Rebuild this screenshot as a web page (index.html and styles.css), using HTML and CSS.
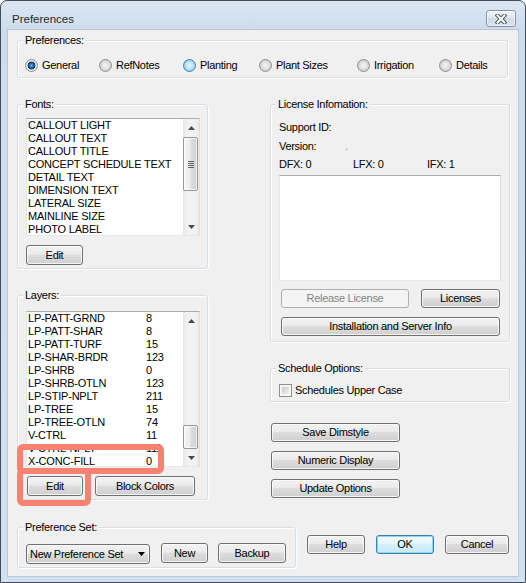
FILE: index.html
```html
<!DOCTYPE html>
<html>
<head>
<meta charset="utf-8">
<title>Preferences</title>
<link rel="stylesheet" href="styles.css">
</head>
<body>
<div class="window">
  <div class="titlebar">
    <span class="title">Preferences</span>
    <button class="close" aria-label="Close">
      <svg width="12" height="10" viewBox="0 0 12 10">
        <path d="M2.5 1.5 L9.5 8.5 M9.5 1.5 L2.5 8.5" stroke="#4b5563" stroke-width="4" stroke-linecap="square" fill="none"/>
        <path d="M2.5 1.5 L9.5 8.5 M9.5 1.5 L2.5 8.5" stroke="#ffffff" stroke-width="2" stroke-linecap="square" fill="none"/>
      </svg>
    </button>
  </div>
  <div class="client">
    <div class="group pref-group">
      <div class="group-title">Preferences:</div>
      <div class="radio-row">
        <label class="opt"><span class="radio checked"></span>General</label>
        <label class="opt"><span class="radio"></span>RefNotes</label>
        <label class="opt"><span class="radio hover"></span>Planting</label>
        <label class="opt"><span class="radio"></span>Plant Sizes</label>
        <label class="opt"><span class="radio"></span>Irrigation</label>
        <label class="opt"><span class="radio"></span>Details</label>
      </div>
    </div>

    <div class="main">
      <div class="col-left">
        <div class="group fonts-group">
          <div class="group-title">Fonts:</div>
          <div class="listbox fonts-list">
            <div class="items">
              <div class="item">CALLOUT LIGHT</div>
              <div class="item">CALLOUT TEXT</div>
              <div class="item">CALLOUT TITLE</div>
              <div class="item">CONCEPT SCHEDULE TEXT</div>
              <div class="item">DETAIL TEXT</div>
              <div class="item">DIMENSION TEXT</div>
              <div class="item">LATERAL SIZE</div>
              <div class="item">MAINLINE SIZE</div>
              <div class="item">PHOTO LABEL</div>
            </div>
            <div class="vscroll">
              <div class="sb-btn"><svg width="7" height="4" viewBox="0 0 7 4"><path d="M0 4 L3.5 0 L7 4 Z" fill="#4a4a4a"/></svg></div>
              <div class="sb-track"><div class="thumb fonts-thumb"><span class="grip"></span></div></div>
              <div class="sb-btn"><svg width="7" height="4" viewBox="0 0 7 4"><path d="M0 0 L3.5 4 L7 0 Z" fill="#4a4a4a"/></svg></div>
            </div>
          </div>
          <button class="btn edit-btn">Edit</button>
        </div>

        <div class="group layers-group">
          <div class="group-title">Layers:</div>
          <div class="listbox layers-list">
            <div class="items">
              <div class="item row"><span>LP-PATT-GRND</span><span>8</span></div>
              <div class="item row"><span>LP-PATT-SHAR</span><span>8</span></div>
              <div class="item row"><span>LP-PATT-TURF</span><span>15</span></div>
              <div class="item row"><span>LP-SHAR-BRDR</span><span>123</span></div>
              <div class="item row"><span>LP-SHRB</span><span>0</span></div>
              <div class="item row"><span>LP-SHRB-OTLN</span><span>123</span></div>
              <div class="item row"><span>LP-STIP-NPLT</span><span>211</span></div>
              <div class="item row"><span>LP-TREE</span><span>15</span></div>
              <div class="item row"><span>LP-TREE-OTLN</span><span>74</span></div>
              <div class="item row"><span>V-CTRL</span><span>11</span></div>
              <div class="item row"><span>V-CTRL-NPLT</span><span>111</span></div>
              <div class="item row"><span>X-CONC-FILL</span><span>0</span></div>
            </div>
            <div class="vscroll">
              <div class="sb-btn"><svg width="7" height="4" viewBox="0 0 7 4"><path d="M0 4 L3.5 0 L7 4 Z" fill="#4a4a4a"/></svg></div>
              <div class="sb-track"><div class="thumb layers-thumb"></div></div>
              <div class="sb-btn"><svg width="7" height="4" viewBox="0 0 7 4"><path d="M0 0 L3.5 4 L7 0 Z" fill="#4a4a4a"/></svg></div>
            </div>
          </div>
          <div class="btn-row">
            <button class="btn layer-edit">Edit</button>
            <button class="btn block-colors">Block Colors</button>
          </div>
        </div>
      </div>

      <div class="col-right">
        <div class="group license-group">
          <div class="group-title">License Infomation:</div>
          <div class="info-row first">Support ID:</div>
          <div class="info-row version"><span>Version:</span><span class="ver-val">.</span></div>
          <div class="info-row fx"><span>DFX: 0</span><span>LFX: 0</span><span>IFX: 1</span></div>
          <div class="listbox license-list"></div>
          <div class="lic-row">
            <button class="btn disabled release">Release License</button>
            <button class="btn licenses">Licenses</button>
          </div>
          <button class="btn install">Installation and Server Info</button>
        </div>

        <div class="group schedule-group">
          <div class="group-title">Schedule Options:</div>
          <label class="check-row"><span class="checkbox"></span>Schedules Upper Case</label>
        </div>

        <button class="btn side-btn first-side">Save Dimstyle</button>
        <button class="btn side-btn">Numeric Display</button>
        <button class="btn side-btn">Update Options</button>
      </div>
    </div>

    <div class="bottom">
      <div class="group set-group">
        <div class="group-title">Preference Set:</div>
        <div class="set-row">
          <button class="btn combo"><span>New Preference Set</span><svg width="7" height="4" viewBox="0 0 7 4"><path d="M0 0 L3.5 4 L7 0 Z" fill="#000"/></svg></button>
          <button class="btn new-btn">New</button>
          <button class="btn backup-btn">Backup</button>
        </div>
      </div>
      <div class="dlg-btns">
        <button class="btn help-btn">Help</button>
        <button class="btn default ok-btn">OK</button>
        <button class="btn cancel-btn">Cancel</button>
      </div>
    </div>
  </div>

  <svg class="annot" width="148" height="62" viewBox="0 0 148 62">
    <rect x="3" y="3" width="141" height="24" rx="3" fill="none" stroke="#f6826f" stroke-width="6"/>
    <rect x="3" y="27" width="68" height="32" rx="3" fill="none" stroke="#f6826f" stroke-width="6"/>
  </svg>
</div>
</body>
</html>
```

FILE: styles.css
```css
* { box-sizing: border-box; }
html, body { margin: 0; padding: 0; }
body {
  width: 526px;
  height: 583px;
  overflow: hidden;
  background: #ffffff;
  font-family: "Liberation Sans", Arial, sans-serif;
  font-size: 11px;
  color: #000;
}
.window {
  position: relative;
  width: 526px;
  height: 583px;
  border: 1px solid #444d5b;
  border-radius: 7px 7px 0 0;
  background: linear-gradient(#dbe6f3, #cddded 30px, #d2e1f1);
  display: flex;
  flex-direction: column;
}
.titlebar {
  flex: none;
  height: 29px;
  display: flex;
  justify-content: space-between;
  align-items: flex-start;
  padding: 0 9px 0 11px;
}
.title {
  margin-top: 11px;
  font-size: 11.5px;
  line-height: 14px;
  color: #2b2b2b;
}
.close {
  margin-top: 9px;
  width: 30px;
  height: 17px;
  padding: 0;
  border: 1px solid #8592a4;
  border-radius: 3px;
  background: linear-gradient(#eef3f9, #dde6f0 50%, #d0dbe8 50%, #dae3ee);
  box-shadow: inset 0 0 0 1px rgba(255,255,255,0.6);
  display: flex;
  align-items: center;
  justify-content: center;
}
.client {
  flex: none;
  margin: 0 7px;
  width: 510px;
  height: 546px;
  background: #f0f0f0;
  box-shadow: 0 0 0 1px #b7c8db;
  padding: 10px 0 0 9px;
  letter-spacing: -0.3px;
}
.group {
  border: 1px solid #d5dfe5;
  border-radius: 3px;
  box-shadow: inset 1px 1px 0 #ffffff, 1px 1px 0 #ffffff;
  padding-left: 8px;
}
.group-title {
  width: max-content;
  margin: -7px 0 0 -3px;
  padding: 0 2px;
  background: #f0f0f0;
  line-height: 13px;
}
.pref-group { width: 491px; padding-bottom: 5px; }
.radio-row {
  margin: 12px 0 0 -1px;
  display: grid;
  grid-template-columns: 74px 84px 76px 98px 82px auto;
  line-height: 13px;
}
.opt { display: flex; align-items: center; gap: 4px; white-space: nowrap; }
.radio {
  flex: none;
  width: 13px;
  height: 13px;
  border-radius: 50%;
  border: 1px solid #8e8f8f;
  background: radial-gradient(circle, #f4f4f4 0, #e4e4e4 3px, #cbcbcb 6px);
}
.radio.checked {
  background: radial-gradient(circle, #8fcaf3 0, #2e7fc4 1.4px, #164f8c 2.8px, #0d345f 3.6px, #dcdcdc 4.2px, #eeeeee 4.8px, #cccccc 6px);
}
.radio.hover {
  border-color: #3c7fb1;
  background: radial-gradient(circle, #eaf7fe 0, #c3e7fa 3px, #8fcdf1 6px);
}

.main { display: flex; align-items: flex-start; margin-top: 26px; }
.col-left { width: 191px; flex: none; }
.col-right { width: 240px; flex: none; margin-left: 62px; }

.listbox {
  display: flex;
  background: #ffffff;
  border: 1px solid;
  border-color: #abadb3 #dbdfe6 #e3e9ef #e2e3ea;
}
.items {
  flex: 1;
  overflow: hidden;
  padding-left: 1px;
  line-height: 13px;
  letter-spacing: -0.2px;
  white-space: nowrap;
}
.item.row { display: grid; grid-template-columns: 118px auto; }
.vscroll {
  flex: none;
  width: 16px;
  display: flex;
  flex-direction: column;
  background: linear-gradient(90deg, #e6e6e6, #f2f2f2 25%, #f2f2f2 75%, #e9e9e9);
}
.sb-btn {
  flex: none;
  height: 17px;
  display: flex;
  align-items: center;
  justify-content: center;
}
.sb-track { flex: 1; display: flex; flex-direction: column; }
.thumb {
  width: 15px;
  border: 1px solid #979797;
  border-radius: 2px;
  background: linear-gradient(90deg, #f5f5f5, #ececec 45%, #dcdcdc 55%, #d0d0d0);
  box-shadow: inset 0 0 0 1px rgba(255,255,255,0.7);
  display: flex;
  align-items: center;
  justify-content: center;
}
.fonts-thumb { margin-top: 1px; height: 54px; }
.layers-thumb { margin-top: auto; height: 24px; }
.grip {
  width: 6px;
  height: 7px;
  background: repeating-linear-gradient(#5e5e5e 0 1px, transparent 1px 2px);
}

.btn {
  display: block;
  height: 20px;
  padding: 0;
  font: inherit;
  letter-spacing: inherit;
  color: #000;
  line-height: 18px;
  text-align: center;
  border: 1px solid #707070;
  border-radius: 3px;
  background: linear-gradient(#f2f2f2, #ebebeb 45%, #dddddd 50%, #cfcfcf);
  box-shadow: inset 0 0 0 1px rgba(255,255,255,0.75);
  white-space: nowrap;
}
.btn.disabled {
  border-color: #adb2b5;
  background: #f4f4f4;
  color: #838383;
  box-shadow: none;
}
.btn.default {
  border-color: #3c7fb1;
  background: linear-gradient(#f3fafe, #e5f5fd 45%, #d6effc 50%, #c8e9fa);
  box-shadow: inset 0 0 0 1px #8fd6f6;
}

.fonts-group { padding-bottom: 3px; }
.fonts-list { margin-top: 7px; width: 174px; height: 118px; }
.edit-btn { margin-top: 9px; width: 57px; }

.layers-group { margin-top: 26px; padding-bottom: 3px; }
.layers-list { margin-top: 9px; width: 174px; height: 156px; }
.btn-row { display: flex; gap: 12px; margin-top: 9px; margin-left: 1px; }
.layer-edit { width: 56px; }
.block-colors { width: 100px; }

.license-group { padding-bottom: 5px; }
.info-row { line-height: 13px; }
.info-row.first { margin-top: 10px; }
.info-row.version { margin-top: 6px; display: grid; grid-template-columns: 66px auto; }
.ver-val { color: #8a8a8a; }
.info-row.fx { margin-top: 5px; display: grid; grid-template-columns: 74px 74px auto; }
.license-list { margin-top: 4px; width: 222px; height: 106px; }
.lic-row { display: flex; gap: 12px; margin-top: 8px; margin-left: 2px; }
.lic-row .btn { height: 19px; line-height: 17px; }
.release { width: 128px; }
.licenses { width: 79px; }
.install { margin-top: 9px; margin-left: 2px; width: 219px; height: 19px; line-height: 17px; }

.schedule-group { margin-top: 26px; padding-bottom: 4px; }
.check-row { margin-top: 9px; display: flex; align-items: center; gap: 3px; line-height: 13px; }
.checkbox {
  flex: none;
  width: 13px;
  height: 13px;
  border: 1px solid #8e8f8f;
  padding: 2px;
  background: linear-gradient(135deg, #c9c9c9, #f3f3f3) content-box, #f7f7f7;
}

.side-btn { margin-top: 9px; margin-left: 1px; width: 129px; height: 19px; line-height: 17px; }
.side-btn.first-side { margin-top: 21px; }

.bottom { display: flex; align-items: flex-start; margin-top: 27px; }
.set-group { width: 279px; flex: none; padding-bottom: 3px; }
.set-row { display: flex; align-items: flex-start; margin-top: 9px; }
.combo {
  margin-top: 1px;
  width: 124px;
  display: flex;
  align-items: center;
  justify-content: space-between;
  padding: 0 4px 0 3px;
}
.new-btn { margin-left: 11px; width: 47px; }
.backup-btn { margin-left: 10px; width: 68px; }
.dlg-btns { display: flex; gap: 11px; margin-left: 11px; margin-top: 8px; }
.dlg-btns .btn { height: 19px; line-height: 17px; }
.help-btn, .ok-btn { width: 58px; }
.cancel-btn { width: 64px; }

.annot {
  position: absolute;
  left: 16px;
  top: 443px;
}
```
